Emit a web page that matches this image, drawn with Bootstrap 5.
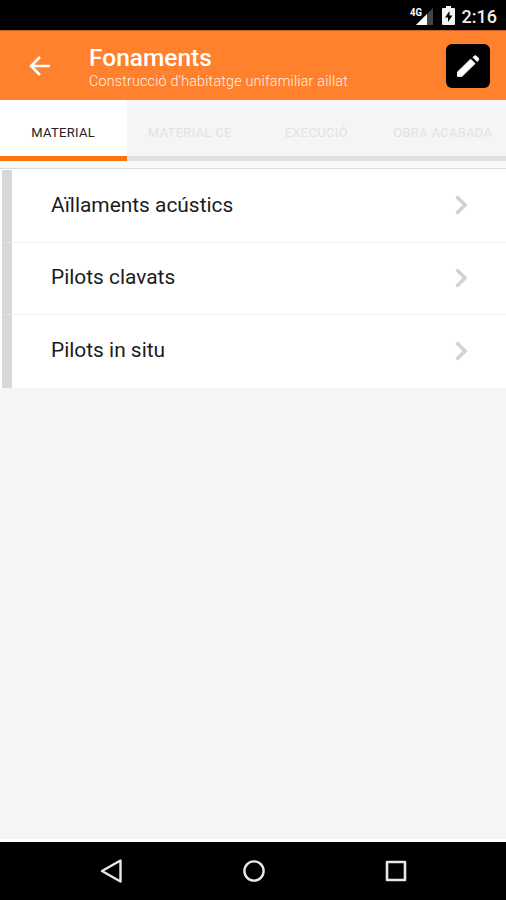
<!DOCTYPE html>
<html lang="ca">
<head>
<meta charset="utf-8">
<meta name="viewport" content="width=device-width, initial-scale=1">
<title>Fonaments</title>
<link href="https://cdn.jsdelivr.net/npm/bootstrap@5.3.0/dist/css/bootstrap.min.css" rel="stylesheet">
<style>
body{font-family:Roboto,"Liberation Sans",sans-serif;background:#f5f5f5;color:#1c1c1c}
svg{display:block;flex:none}
.status-bar{height:30px;background:#000;padding-right:9px}
.clock{font-size:18px;font-weight:500;line-height:30px;margin-left:7px;padding-top:3px;color:#eee}
.app-header{height:70px;background:#ff802d;border-top:1px solid #c9601c;padding:0 16px 0 28px}
.app-title{font-size:24.5px;font-weight:500;line-height:28px;margin:0}
.app-sub{font-size:14.3px;font-weight:300;line-height:18px;letter-spacing:.19px;color:#fff0e6}
.titles{margin-left:37px;padding-top:2px}
.edit-btn{width:44px;height:44px;background:#000;border-radius:6px}
.tab-strip{height:61px;background:#f5f5f5}
.tab-strip .nav-link{height:61px;border-bottom:5px solid #e0e0e0;border-radius:0;padding:9px 0 0;font-size:13px;letter-spacing:.3px;color:#e2e2e2;white-space:nowrap}
.tab-strip .nav-link.active{background:#fff;color:#222;border-bottom-color:#f87510}
.strip-gap{height:8px;background:#fafafa;border-bottom:1px solid #dcdcdf}
.chapters{padding-top:1px;background:#fff}
.chapters .list-group-item{height:72.600px;padding:0 37px 1px 39px;margin-left:2px;border:0;border-left:10px solid #d8d8d8;border-bottom:1px solid #f1f1f1;font-size:20.900px;color:#1c1c1c}
.nav-keys{height:61px;background:#000;border-top:3px solid #fff;padding:0 98px 0 100px}
</style>
<script src="https://cdn.jsdelivr.net/npm/bootstrap@5.3.0/dist/js/bootstrap.bundle.min.js"></script>
</head>
<body class="d-flex flex-column vh-100 overflow-hidden">
<div class="status-bar d-flex align-items-center justify-content-end">
  <svg width="24" height="20" viewBox="0 0 24 20"><path d="M23 3v17H6z" fill="#444"/><path d="M17 9v11H6z" fill="#fff"/><text x="0" y="11" font-size="10" font-weight="700" fill="#fff" textLength="12" lengthAdjust="spacingAndGlyphs">4G</text></svg>
  <svg class="ms-2" width="13" height="19" viewBox="0 0 13 19"><path d="M1 2h3V0h5v2h3q1 0 1 1v15q0 1-1 1H1q-1 0-1-1V3q0-1 1-1z" fill="#f4f4f4"/><path d="M7.500 5L3 11.500h3V16l4.500-6.500h-3z" fill="#000"/></svg>
  <span class="clock">2:16</span>
</div>
<header class="app-header d-flex align-items-center text-white">
  <svg width="24" height="24" viewBox="0 0 24 24" fill="none" stroke="#fff" stroke-width="2.600"><path d="M22 12H3.500M12 3l-9 9 9 9"/></svg>
  <div class="titles flex-grow-1">
    <h1 class="app-title"><span>Fonaments</span></h1>
    <div class="app-sub"><span>Construcció d'habitatge unifamiliar aillat</span></div>
  </div>
  <button class="edit-btn btn p-0 border-0 d-flex align-items-center justify-content-center" aria-label="Edita">
    <svg width="24" height="24" viewBox="0 0 24 24" fill="#fff" stroke="#fff" stroke-width="1" stroke-linejoin="round"><path d="M1.500 18L14.600 5.200l4.400 4.400L6 22.300H1.500z"/><path d="M17 3.300l1-1q1.300-1.200 2.600 0l1.600 1.600q1.200 1.300 0 2.600l-1 1z"/></svg>
  </button>
</header>
<nav class="tab-strip nav nav-fill flex-nowrap row g-0">
  <a class="nav-link active col-3 d-flex align-items-center justify-content-center"><span>MATERIAL</span></a>
  <a class="nav-link col-3 d-flex align-items-center justify-content-center"><span>MATERIAL CE</span></a>
  <a class="nav-link col-3 d-flex align-items-center justify-content-center"><span>EXECUCIÓ</span></a>
  <a class="nav-link col-3 d-flex align-items-center justify-content-center"><span>OBRA ACABADA</span></a>
</nav>
<div class="strip-gap"></div>
<main class="flex-grow-1">
  <div class="chapters list-group list-group-flush">
    <div class="list-group-item d-flex align-items-center justify-content-between"><span>Aïllaments acústics</span><svg width="15" height="20" viewBox="0 0 15 20" fill="none" stroke="#d2d2d2" stroke-width="3.600"><path d="M2.500 1.500L11 10l-8.500 8.500"/></svg></div>
    <div class="list-group-item d-flex align-items-center justify-content-between"><span>Pilots clavats</span><svg width="15" height="20" viewBox="0 0 15 20" fill="none" stroke="#d2d2d2" stroke-width="3.600"><path d="M2.500 1.500L11 10l-8.500 8.500"/></svg></div>
    <div class="list-group-item d-flex align-items-center justify-content-between"><span>Pilots in situ</span><svg width="15" height="20" viewBox="0 0 15 20" fill="none" stroke="#d2d2d2" stroke-width="3.600"><path d="M2.500 1.500L11 10l-8.500 8.500"/></svg></div>
  </div>
</main>
<footer class="nav-keys d-flex align-items-center justify-content-between">
  <svg width="24" height="26" viewBox="0 0 24 26" fill="none" stroke="#e8e8e8" stroke-width="2.400" stroke-linejoin="round"><path d="M20.500 2.500v21L2 13z"/></svg>
  <svg width="24" height="24" viewBox="0 0 24 24" fill="none" stroke="#e8e8e8" stroke-width="2.400"><circle cx="12" cy="12" r="9.600"/></svg>
  <svg width="24" height="24" viewBox="0 0 24 24" fill="none" stroke="#e8e8e8" stroke-width="2.600" stroke-linejoin="round"><path d="M3 3h18v18H3z"/></svg>
</footer>
</body>
</html>
